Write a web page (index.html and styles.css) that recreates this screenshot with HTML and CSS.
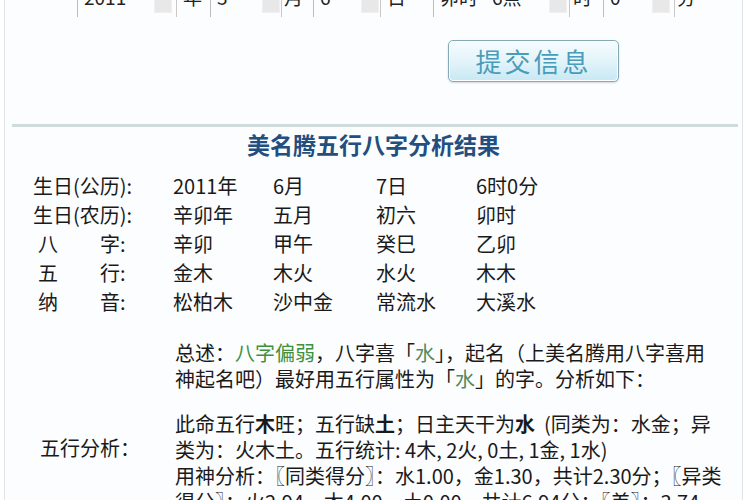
FILE: index.html
```html
<!DOCTYPE html>
<html lang="zh">
<head>
<meta charset="utf-8">
<title>美名腾五行八字分析结果</title>
<link rel="stylesheet" href="styles.css">
</head>
<body>
<div class="page">
  <div class="toprow">
    <div class="sel s1"><span class="val">2011</span><span class="arr"></span></div>
    <span class="unit u1">年</span>
    <div class="sel s2"><span class="val">3</span><span class="arr"></span></div>
    <span class="unit u2">月</span>
    <div class="sel s3"><span class="val">6</span><span class="arr"></span></div>
    <span class="unit u3">日</span>
    <div class="sel s4"><span class="val">卯时</span><span class="val v2">6点</span><span class="arr"></span></div>
    <span class="unit u4">时</span>
    <div class="sel s5"><span class="val">0</span><span class="arr"></span></div>
    <span class="unit u5">分</span>
  </div>

  <div class="btnrow">
    <button class="submit">提交信息</button>
  </div>

  <div class="divider"></div>

  <h1 class="title">美名腾五行八字分析结果</h1>

  <div class="info">
    <div class="row"><span>生日(公历):</span><span>2011年</span><span>6月</span><span>7日</span><span>6时0分</span></div>
    <div class="row"><span>生日(农历):</span><span>辛卯年</span><span>五月</span><span>初六</span><span>卯时</span></div>
    <div class="row"><span class="lab"><span class="l1">八</span><span>字:</span></span><span>辛卯</span><span>甲午</span><span>癸巳</span><span>乙卯</span></div>
    <div class="row"><span class="lab"><span class="l1">五</span><span>行:</span></span><span>金木</span><span>木火</span><span>水火</span><span>木木</span></div>
    <div class="row"><span class="lab"><span class="l1">纳</span><span>音:</span></span><span>松柏木</span><span>沙中金</span><span>常流水</span><span>大溪水</span></div>
  </div>

  <div class="analysis">
    <div class="alabel">五行分析：</div>
    <div class="atext">
      <p>总述：<span class="green">八字偏弱</span>，八字喜「<span class="green2">水</span>」，起名（上美名腾用八字喜用<br>神起名吧）最好用五行属性为「<span class="green2">水</span>」的字。分析如下：</p>
      <p class="p2">此命五行<b>木</b>旺；五行缺<b>土</b>；日主天干为<b>水</b>&nbsp; (同类为：水金；异<br>类为：火木土。五行统计: 4木, 2火, 0土, 1金, 1水)<br>用神分析：〖同类得分〗：水1.00，金1.30，共计2.30分；〖异类<br>得分〗：火2.94，木4.00，土0.00，共计6.94分；〖差〗：3.74</p>
    </div>
  </div>
</div>
</body>
</html>
```

FILE: styles.css
```css
html, body {
  margin: 0;
  padding: 0;
  background: #ffffff;
  overflow: hidden;
}

body {
  font-family: "Noto Sans CJK SC", "Noto Sans", sans-serif;
  color: #1a1a1a;
}

.page {
  margin-left: 4px;
  width: 739px;
  height: 500px;
  box-sizing: border-box;
  border-left: 1px solid #dfe4e7;
  border-right: 1px solid #dfe4e7;
  background: #fcfdfe;
  overflow: hidden;
}

/* top (cut-off) form row */
.toprow {
  display: flex;
  align-items: flex-start;
  height: 32px;
  margin-top: -15px;
  font-size: 19px;
  line-height: 24px;
  color: #222;
}

.sel {
  display: flex;
  align-items: flex-start;
  height: 32px;
  box-sizing: border-box;
  border-left: 1px solid #bdbdbd;
  border-right: 1px solid #c8c8c8;
}

.val {
  padding-left: 6px;
}

.v2 {
  padding-left: 14px;
}

.arr {
  margin-left: auto;
  margin-top: 4px;
  width: 18px;
  height: 24px;
  background: #e8e8e8;
  border: 1px solid #f0f0f0;
  box-sizing: border-box;
}

.s1 { margin-left: 72px; width: 100px; }
.s1 .arr { margin-right: 4px; }
.u1 { margin-left: 6px; }
.s2 { margin-left: 8px; width: 72px; }
.s2 .arr { margin-right: 1px; }
.u2 { margin-left: 2px; }
.s3 { margin-left: 10px; width: 68px; }
.s3 .arr { margin-right: 1px; }
.u3 { margin-left: 6px; }
.s4 { margin-left: 27px; width: 137px; }
.s4 .arr { margin-right: 2px; }
.u4 { margin-left: 3px; }
.s5 { margin-left: 11px; width: 72px; }
.s5 .arr { margin-right: 4px; }
.u5 { margin-left: 2px; }

/* submit button */
.btnrow {
  display: flex;
  margin-top: 23px;
}

.submit {
  margin-left: 443px;
  width: 171px;
  height: 42px;
  padding: 0;
  border: 1px solid #86a9b8;
  border-radius: 5px;
  background: linear-gradient(#f6fcfe, #e3f4fa 50%, #c8e8f3);
  box-shadow: inset 0 0 0 1px #ffffff, 0 1px 2px rgba(120, 150, 160, 0.35);
  font-family: "Noto Sans CJK SC", sans-serif;
  font-size: 26px;
  letter-spacing: 3px;
  color: #4a9cba;
  line-height: 40px;
}

.divider {
  margin: 42px 4px 0 7px;
  height: 3px;
  background: #d0dcdc;
}

.title {
  margin: 2px 0 0 0;
  text-align: center;
  font-size: 23px;
  line-height: 30px;
  font-weight: bold;
  color: #234f80;
}

/* info table */
.info {
  margin-top: 12px;
  font-size: 20px;
}

.row {
  display: grid;
  grid-template-columns: 140px 100px 103px 100px 1fr;
  padding-left: 28px;
  height: 29px;
  line-height: 29px;
  white-space: nowrap;
}

.lab {
  display: flex;
}

.l1 {
  width: 62px;
  padding-left: 5px;
}

/* analysis */
.analysis {
  display: flex;
  margin-top: 24px;
  font-size: 20px;
  line-height: 26px;
}

.alabel {
  width: 170px;
  flex: none;
  box-sizing: border-box;
  padding-left: 35px;
  padding-top: 95px;
}

.atext p {
  margin: 0;
  white-space: nowrap;
}

.atext .p2 {
  margin-top: 19px;
}

.green {
  color: #3f913f;
}

.green2 {
  color: #4f8a60;
}

b {
  font-weight: bold;
}
```
